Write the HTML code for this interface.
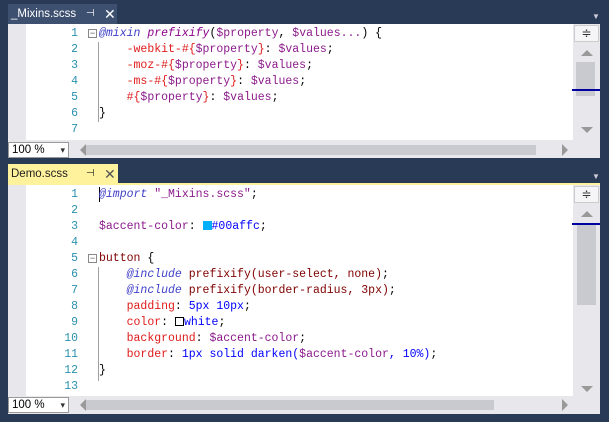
<!DOCTYPE html>
<html><head><meta charset="utf-8">
<style>
*{margin:0;padding:0;box-sizing:border-box}
body{width:609px;height:422px;background:#293a56;position:relative;overflow:hidden;font-family:"Liberation Sans",sans-serif}
.tab{position:absolute;height:20px;font-size:11.5px;padding:4px 0 0 3px;white-space:nowrap}
.pin{position:absolute;left:78px;top:4px;font-size:10px}
.x{position:absolute;left:96px;top:2px;font-size:14px}
.panel{position:absolute;left:8px;width:592px;background:#e8e8ec}
.code{position:absolute;left:18px;right:27px;top:0;background:#fff;overflow:hidden}
.ln{position:absolute;left:0;width:52px;text-align:right;color:#2b91af}
.line{position:absolute;left:0;height:16px;font-family:"Liberation Mono",monospace;font-size:11.5px;line-height:16px;white-space:pre}
.src{position:absolute;left:73px}
.guide{position:absolute;left:72px;width:1px;border-left:1px solid #a0a0a0}
.fold{position:absolute;left:62px;width:9px;height:9px;border:1px solid #888;font-size:9px;line-height:6px;text-align:center;color:#555;background:#fff}
.vs{position:absolute;right:0;top:0;width:27px;background:#e8e8ec}
.split{position:absolute;left:1px;top:1px;width:25px;height:17px;background:#f5f5f7;border:1px solid #ccc;font-size:12px;text-align:center;line-height:15px;color:#333}
.zoom{position:absolute;left:0;width:61px;height:16px;background:#fff;border:1px solid #999;font-size:11.5px;padding-left:3px;line-height:14px}
.zoom:after{content:"▾";position:absolute;right:3px;top:0;font-size:9px;color:#333}
.hs{position:absolute;left:78px;height:10px;background:#c9cad0}
.au{position:absolute;left:8px;width:0;height:0;border-left:6px solid transparent;border-right:6px solid transparent;border-bottom:6px solid #999}
.ad{position:absolute;left:8px;width:0;height:0;border-left:6px solid transparent;border-right:6px solid transparent;border-top:6px solid #999}
.al{position:absolute;left:72px;width:0;height:0;border-top:6px solid transparent;border-bottom:6px solid transparent;border-right:6px solid #999}
.ar{position:absolute;left:554px;width:0;height:0;border-top:6px solid transparent;border-bottom:6px solid transparent;border-left:6px solid #999}
.kw{color:#3f3fc8;font-style:italic}
.fn{color:#8b008b;font-style:italic}
.pr{color:#e01b1b}
.vr{color:#8b1a8b}
.va{color:#0000ff}
.sel{color:#800000}
.st{color:#8b1a8b}
</style></head><body>

<div class="tab" style="left:8px;top:4px;width:109px;background:#3e5070;color:#fff">_Mixins.scss<span class="pin">⊣</span><span class="x">✕</span></div>
<div style="position:absolute;left:592px;top:12px;color:#ccd;font-size:8px">▼</div>

<div class="panel" style="top:24px;height:134px">
 <div class="code" style="height:116px">
  <div class="guide" style="top:18px;height:80px"></div>
  <div class="fold" style="top:5px">−</div>
  <div class="line" style="top:2px"><span class="ln">1</span><span class="src"><span class="kw">@mixin</span> <span class="fn">prefixify</span>(<span class="vr">$property</span>, <span class="vr">$values...</span>) {</span></div>
  <div class="line" style="top:18px"><span class="ln">2</span><span class="src">    <span class="pr">-webkit-#{</span><span class="vr">$property</span><span class="pr">}</span>: <span class="vr">$values</span>;</span></div>
  <div class="line" style="top:34px"><span class="ln">3</span><span class="src">    <span class="pr">-moz-#{</span><span class="vr">$property</span><span class="pr">}</span>: <span class="vr">$values</span>;</span></div>
  <div class="line" style="top:50px"><span class="ln">4</span><span class="src">    <span class="pr">-ms-#{</span><span class="vr">$property</span><span class="pr">}</span>: <span class="vr">$values</span>;</span></div>
  <div class="line" style="top:66px"><span class="ln">5</span><span class="src">    <span class="pr">#{</span><span class="vr">$property</span><span class="pr">}</span>: <span class="vr">$values</span>;</span></div>
  <div class="line" style="top:82px"><span class="ln">6</span><span class="src">}</span></div>
  <div class="line" style="top:98px"><span class="ln">7</span></div>
 </div>
 <div class="vs" style="height:116px">
  <div class="split">≑</div>
  <div class="au" style="top:26px"></div>
  <div style="position:absolute;left:3px;top:38px;width:19px;height:34px;background:#c9cad0"></div>
  <div style="position:absolute;left:-1px;top:65px;width:28px;height:2px;background:#0000a0"></div>
  <div class="ad" style="top:103px"></div>
 </div>
 <div class="zoom" style="top:118px">100 %</div>
 <div class="al" style="top:120px"></div>
 <div class="hs" style="top:121px;width:450px"></div>
 <div class="ar" style="top:120px"></div>
</div>

<div class="tab" style="left:8px;top:164px;width:110px;background:#fff29d;color:#1e1e1e">Demo.scss<span class="pin">⊣</span><span class="x" style="color:#555">✕</span></div>
<div style="position:absolute;left:592px;top:172px;color:#ccd;font-size:8px">▼</div>
<div style="position:absolute;left:8px;top:183px;width:592px;height:2px;background:#fff29d"></div>

<div class="panel" style="top:185px;height:229px">
 <div class="code" style="height:211px">
  <div class="guide" style="top:82px;height:114px"></div>
  <div class="fold" style="top:69px">−</div>
  <div style="position:absolute;left:73px;top:2px;width:1px;height:15px;background:#000"></div>
  <div class="line" style="top:2px"><span class="ln">1</span><span class="src"><span class="kw">@import</span> <span class="st">"_Mixins.scss"</span>;</span></div>
  <div class="line" style="top:18px"><span class="ln">2</span></div>
  <div class="line" style="top:34px"><span class="ln">3</span><span class="src"><span class="vr">$accent-color</span>: <span style="display:inline-block;width:9px;height:9px;background:#00affc;vertical-align:-1px"></span><span class="va">#00affc</span>;</span></div>
  <div class="line" style="top:50px"><span class="ln">4</span></div>
  <div class="line" style="top:66px"><span class="ln">5</span><span class="src"><span class="sel">button</span> {</span></div>
  <div class="line" style="top:82px"><span class="ln">6</span><span class="src">    <span class="kw">@include</span> <span class="sel">prefixify(user-select, none)</span>;</span></div>
  <div class="line" style="top:98px"><span class="ln">7</span><span class="src">    <span class="kw">@include</span> <span class="sel">prefixify(border-radius, 3px)</span>;</span></div>
  <div class="line" style="top:114px"><span class="ln">8</span><span class="src">    <span class="pr">padding</span>: <span class="va">5px 10px</span>;</span></div>
  <div class="line" style="top:130px"><span class="ln">9</span><span class="src">    <span class="pr">color</span>: <span style="display:inline-block;width:9px;height:9px;border:1px solid #000;vertical-align:-1px"></span><span class="va">white</span>;</span></div>
  <div class="line" style="top:146px"><span class="ln">10</span><span class="src">    <span class="pr">background</span>: <span class="vr">$accent-color</span>;</span></div>
  <div class="line" style="top:162px"><span class="ln">11</span><span class="src">    <span class="pr">border</span>: <span class="va">1px solid darken(</span><span class="vr">$accent-color</span><span class="va">, 10%)</span>;</span></div>
  <div class="line" style="top:178px"><span class="ln">12</span><span class="src">}</span></div>
  <div class="line" style="top:194px"><span class="ln">13</span></div>
 </div>
 <div class="vs" style="height:211px">
  <div class="split">≑</div>
  <div class="au" style="top:26px"></div>
  <div style="position:absolute;left:4px;top:40px;width:19px;height:80px;background:#c9cad0"></div>
  <div style="position:absolute;left:-1px;top:38px;width:28px;height:2px;background:#0000a0"></div>
  <div class="ad" style="top:201px"></div>
 </div>
 <div class="zoom" style="top:212px">100 %</div>
 <div class="al" style="top:214px"></div>
 <div class="hs" style="top:215px;width:408px"></div>
 <div class="ar" style="top:214px"></div>
</div>
</body></html>
